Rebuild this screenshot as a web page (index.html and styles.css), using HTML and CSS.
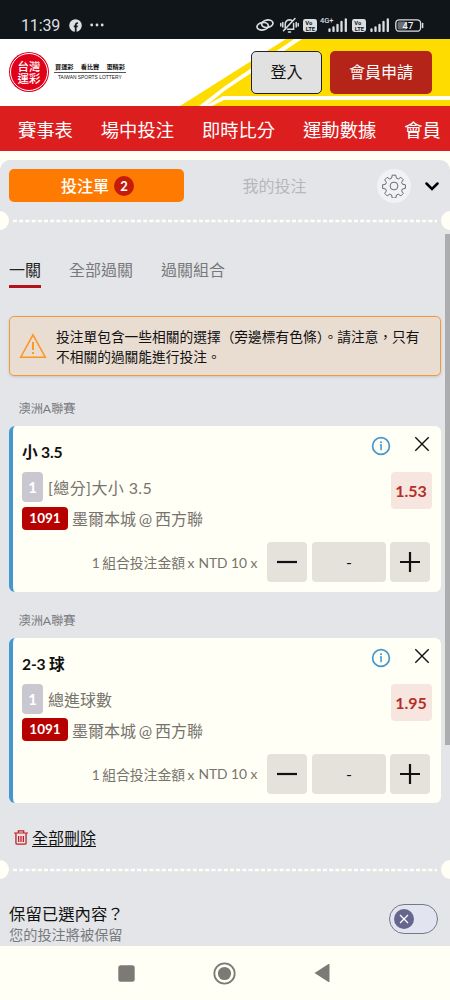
FILE: index.html
```
<!DOCTYPE html>
<html lang="zh-Hant">
<head>
<meta charset="utf-8">
<title>台灣運彩</title>
<link rel="stylesheet" href="styles.css">
</head>
<body>
<svg width="0" height="0" class="defs">
  <symbol id="info" viewBox="0 0 20 20"><circle cx="10" cy="10" r="8.4" fill="none" stroke="#4398d0" stroke-width="1.7"/><circle cx="10" cy="6.3" r="1" fill="#4398d0"/><path d="M8.900 9.100H10.100V14.200" fill="none" stroke="#4398d0" stroke-width="1.500"/></symbol>
  <symbol id="close" viewBox="0 0 16 16"><path d="M1.3 1.3L14.7 14.7M14.7 1.3L1.3 14.7" fill="none" stroke="#111" stroke-width="1.4"/></symbol>
  <symbol id="signal" viewBox="0 0 20 14"><path d="M1.5 13V11.500M5.5 13V9.500M9.5 13V7M13.5 13V4M17.8 13V1.500" fill="none" stroke="#dcdfe1" stroke-width="2.3" stroke-linecap="round"/></symbol>
</svg>
<div class="statusbar">
  <span class="time">11:39</span>
  <svg class="fb" width="13" height="13" viewBox="0 0 13 13"><circle cx="6.5" cy="6.5" r="6.3" fill="#dcdfe1"/><path d="M6.7 13V6Q6.7 4 8.9 4.1M4.8 7.4H8.7" fill="none" stroke="#10151a" stroke-width="1.7"/></svg>
  <svg class="dots" width="14" height="4" viewBox="0 0 14 4"><circle cx="1.7" cy="2" r="1.4"/><circle cx="7" cy="2" r="1.4"/><circle cx="12.2" cy="2" r="1.4"/></svg>
  <div class="status-right">
    <svg width="18" height="14" viewBox="0 0 18 14"><g fill="none" stroke="#dcdfe1" stroke-width="1.7" stroke-linecap="round"><ellipse cx="11.300" cy="5.700" rx="5.700" ry="3.700" transform="rotate(-10 11.300 5.700)"/><ellipse cx="6.700" cy="8.300" rx="5.700" ry="3.700" transform="rotate(-10 6.700 8.300)"/></g></svg>
    <svg class="bell" width="19" height="17" viewBox="0 0 19 17"><g fill="none" stroke="#dcdfe1" stroke-width="1.5" stroke-linecap="round"><path d="M5.200 12.200V7.500Q5.200 3.300 9.500 2.800Q11 2.900 12 3.700M13.600 6.500V12.200H7.500M3.500 13.800L15 1.500M8.500 15H10.500M2.800 5.500V10M.8 6.500V9M16.200 5.500V10M18.200 6.500V9"/></g></svg>
    <svg class="volte" width="14" height="13" viewBox="0 0 14 13"><rect width="14" height="13" rx="2.4" fill="#dcdfe1"/><text x="5.800" y="6" text-anchor="middle" class="volte-text">Vo</text><text x="7.4" y="11.7" text-anchor="middle" class="volte-text">LTE</text></svg>
    <div class="network"><span class="net-label">4G+</span><svg width="20" height="14"><use href="#signal"/></svg></div>
    <svg class="volte second" width="14" height="13" viewBox="0 0 14 13"><rect width="14" height="13" rx="2.4" fill="#dcdfe1"/><text x="5.800" y="6" text-anchor="middle" class="volte-text">Vo</text><text x="7.4" y="11.7" text-anchor="middle" class="volte-text">LTE</text></svg>
    <svg class="sig2" width="20" height="14"><use href="#signal"/></svg>
    <svg width="29" height="13" viewBox="0 0 29 13"><rect x=".8" y=".8" width="24.800" height="11.400" rx="3.500" fill="none" stroke="#dcdfe1" stroke-width="1.300"/><rect x="2.600" y="2.500" width="9" height="8" rx="1.500" fill="#6a6e72"/><path d="M27.600 4.500V8.500" stroke="#dcdfe1" stroke-width="1.500" stroke-linecap="round"/><text x="13" y="10" text-anchor="middle" class="battery-text">47</text></svg>
  </div>
</div>

<header class="header">
  <svg class="stripes" width="450" height="67" viewBox="0 0 450 67"><path d="M180 67L286 0H450V67Z" fill="#fedc00"/><path d="M199 67L225 47L294 0H302L225 51.500L206 67Z" fill="#fffff5"/><path d="M205 67L223 57H450V61H224L212 67Z" fill="#fffff5"/></svg>
  <div class="brand">
    <div class="seal"><div class="seal-text"><span>台灣</span><span>運彩</span></div></div>
    <div class="slogan"><div class="slogan-zh"><span>買運彩</span><span>看比賽</span><span>更精彩</span></div><div class="slogan-en">TAIWAN SPORTS LOTTERY</div></div>
  </div>
  <div class="account"><button class="login">登入</button><button class="join">會員申請</button></div>
</header>

<nav class="mainnav"><a>賽事表</a><a>場中投注</a><a>即時比分</a><a>運動數據</a><a>會員</a></nav>

<main class="slip">
  <div class="slip-head">
    <div class="slip-tab active">投注單<span class="count">2</span></div>
    <div class="slip-tab muted">我的投注</div>
    <div class="gear"><svg width="24" height="24" viewBox="0 0 24 24"><path d="M10.200 1.200h3.600l.6 3 1.900.8 2.500-1.700 2.500 2.500-1.700 2.500.8 1.900 3 .6v3.600l-3 .6-.8 1.900 1.700 2.500-2.500 2.500-2.500-1.700-1.900.8-.6 3h-3.600l-.6-3-1.900-.8-2.500 1.700-2.500-2.500 1.700-2.500-.8-1.900-3-.6v-3.600l3-.6.8-1.900-1.700-2.500 2.500-2.500 2.500 1.700 1.900-.8z" fill="none" stroke="#696b70" stroke-width="1" stroke-linejoin="round"/><circle cx="12" cy="12" r="3.900" fill="none" stroke="#696b70"/></svg></div>
    <svg class="chevron" width="14" height="9" viewBox="0 0 14 9"><path d="M1.500 1.500L7 7L12.500 1.500" fill="none" stroke="#000" stroke-width="2.500" stroke-linecap="round"/></svg>
  </div>
  <div class="tear"><svg width="450" height="4"><path d="M13 2H437" stroke="#fffff5" stroke-width="2.600" stroke-dasharray="4 2.200"/></svg></div>

  <div class="tabs"><span class="tab current">一關</span><span class="tab">全部過關</span><span class="tab">過關組合</span></div>

  <div class="notice">
    <svg width="28" height="26" viewBox="0 0 28 26"><path d="M14 1.800L26.300 24.200H1.700Z" fill="none" stroke="#ff941c" stroke-width="1.500"/><path d="M14 9V17M14 19V21" stroke="#ff941c" stroke-width="1.900"/></svg>
    <p>投注單包含一些相關的選擇（旁邊標有色條）。請注意，只有<br>不相關的過關能進行投注。</p>
  </div>

  <section class="bet">
    <div class="league">澳洲A聯賽</div>
    <article class="card">
      <div class="pick"><strong>小 3.5</strong><svg class="info" width="20" height="20"><use href="#info"/></svg><svg class="close" width="16" height="16"><use href="#close"/></svg></div>
      <div class="details">
        <div class="lines">
          <div class="market"><span class="leg">1</span><span class="market-name range">[總分]大小 3.5</span></div>
          <div class="match"><span class="code">1091</span><span class="teams">墨爾本城 @ 西方聯</span></div>
        </div>
        <div class="odds">1.53</div>
      </div>
      <div class="stake"><span class="stake-zh">1 組合投注金額 x</span><span class="stake-ntd">NTD 10 x</span><button class="step"><svg width="20" height="20"><path d="M0 10H20" stroke="#111" stroke-width="2.200"/></svg></button><div class="amount">-</div><button class="step plus"><svg width="20" height="20"><path d="M0 10H20M10 0V20" stroke="#111" stroke-width="2.200"/></svg></button></div>
    </article>
  </section>

  <section class="bet last">
    <div class="league">澳洲A聯賽</div>
    <article class="card">
      <div class="pick"><strong>2-3 球</strong><svg class="info" width="20" height="20"><use href="#info"/></svg><svg class="close" width="16" height="16"><use href="#close"/></svg></div>
      <div class="details">
        <div class="lines">
          <div class="market"><span class="leg">1</span><span class="market-name">總進球數</span></div>
          <div class="match"><span class="code">1091</span><span class="teams">墨爾本城 @ 西方聯</span></div>
        </div>
        <div class="odds">1.95</div>
      </div>
      <div class="stake"><span class="stake-zh">1 組合投注金額 x</span><span class="stake-ntd">NTD 10 x</span><button class="step"><svg width="20" height="20"><path d="M0 10H20" stroke="#111" stroke-width="2.200"/></svg></button><div class="amount">-</div><button class="step plus"><svg width="20" height="20"><path d="M0 10H20M10 0V20" stroke="#111" stroke-width="2.200"/></svg></button></div>
    </article>
  </section>

  <div class="clear"><svg width="14" height="15" viewBox="0 0 13 15" preserveAspectRatio="none"><path d="M0 3H13M4 2.800V.8H9V2.800M1.800 3.500V13.200Q1.800 14.200 2.800 14.200H10.200Q11.200 14.200 11.200 13.200V3.500M4.300 6V12M6.500 6V12M8.700 6V12" fill="none" stroke="#c41f28" stroke-width="1.200"/></svg><a>全部刪除</a></div>
  <div class="tear"><svg width="450" height="4"><path d="M13 2H437" stroke="#fffff5" stroke-width="2.600" stroke-dasharray="4 2.200"/></svg></div>
  <div class="keep">
    <div><div class="keep-title">保留已選內容？</div><div class="keep-sub">您的投注將被保留</div></div>
    <div class="toggle"><div class="knob"><svg width="10" height="10" viewBox="0 0 10 10"><path d="M1 1L9 9M9 1L1 9" stroke="#fff" stroke-width="1.200"/></svg></div></div>
  </div>
  <div class="scrollbar"></div>
</main>

<footer class="sysnav">
  <svg width="17" height="17"><rect x=".3" y=".3" width="16.400" height="16.400" rx="2.500" fill="#7d7a76"/></svg>
  <svg width="23" height="23"><circle cx="11.500" cy="11.500" r="10.200" fill="none" stroke="#7d7a76" stroke-width="1.800"/><circle cx="11.500" cy="11.500" r="6.600" fill="#7d7a76"/></svg>
  <svg width="16" height="20"><path d="M.5 10L14.500 1Q15.500 .6 15.500 1.500V18.500Q15.500 19.400 14.500 19Z" fill="#7d7a76"/></svg>
</footer>
</body>
</html>
```
FILE: styles.css
```
* { box-sizing: border-box; }
body {
  margin: 0;
  width: 450px;
  height: 1000px;
  overflow: hidden;
  background: #fffff5;
  font-family: Lato, "Noto Sans CJK TC", sans-serif;
  color: #111;
}
svg { display: block; flex: none; }
.defs { position: absolute; }
button { border: 0; padding: 0; font-family: inherit; color: inherit; }
span, a, strong { white-space: nowrap; }

.statusbar {
  display: flex;
  align-items: center;
  height: 39px;
  padding: 11px 26px 0 21px;
  background: #10151a;
  color: #dcdfe1;
}
.time { font: 16px/18px Roboto, sans-serif; width: 39px; padding-top: 1px; letter-spacing: -.15px; }
.fb { margin-left: 9px; }
.dots { margin-left: 8px; fill: #dcdfe1; }
.status-right { display: flex; align-items: center; margin-left: auto; }
.bell { margin-left: 6px; }
.volte { margin-left: 4px; }
.volte-text { font: bold 5.8px Roboto, sans-serif; fill: #10151a; }
.network { position: relative; margin-left: 11px; }
.net-label { position: absolute; left: -8px; top: -2px; font: 500 7.5px/9px Roboto, sans-serif; }
.volte.second { margin-left: 4px; }
.sig2 { margin: 0 5px 0 4px; }
.battery-text { font: 500 9.500px Roboto, sans-serif; fill: #eee; }

.header {
  position: relative;
  display: flex;
  justify-content: space-between;
  height: 67px;
  padding: 12px 18px 0 9px;
  background: #fff;
}
.stripes { position: absolute; left: 0; top: 0; }
.brand { position: relative; display: flex; }
.seal {
  width: 40px;
  height: 40px;
  margin-top: 1px;
  padding: 1px;
  border-radius: 50%;
  background: #e1001a;
}
.seal-text {
  display: flex;
  flex-direction: column;
  align-items: center;
  width: 38px;
  height: 38px;
  padding-top: 6px;
  border: 1px solid #fff;
  border-radius: 50%;
  color: #fff;
  font-family: "Noto Sans CJK TC", sans-serif;
  font-size: 11.500px;
  font-weight: 500;
  line-height: 12px;
}
.slogan { margin: 11px 0 0 5px; width: 72px; }
.slogan-zh {
  display: flex;
  justify-content: space-between;
  height: 11px;
  padding: 0 1px;
  border-bottom: 1px solid #555;
  font-size: 6.200px;
  font-weight: 700;
  line-height: 9px;
}
.slogan-en { padding-left: 4px; font: 4.900px/9px "Liberation Sans", sans-serif; white-space: nowrap; }
.account { position: relative; display: flex; gap: 8px; }
.login, .join { height: 43px; border-radius: 5px; font-size: 16px; line-height: 40px; padding-bottom: 2px; }
.login { width: 71px; border: 1px solid #222; background: #e1e1e1; }
.join { width: 102px; background: #b42419; color: #fff; }

.mainnav {
  display: flex;
  gap: 28px;
  height: 45px;
  padding-left: 18px;
  overflow: hidden;
  background: #dc1e1e;
  color: #fff;
  font-size: 18.300px;
  line-height: 48px;
}

.slip {
  position: relative;
  height: 786px;
  margin-top: 9px;
  border-radius: 10px 10px 0 0;
  background: #e4e5e8;
}
.slip-head { display: flex; align-items: center; height: 51px; padding: 0 11px 0 9px; }
.slip-tab { font-size: 16px; line-height: 32px; text-align: center; }
.slip-tab.active {
  display: flex;
  align-items: center;
  justify-content: center;
  gap: 5px;
  width: 175px;
  height: 33px;
  padding-left: 2px;
  border-radius: 5px;
  background: #ff7a00;
  color: #fff;
  font-weight: 500;
}
.count { width: 20px; height: 20px; border-radius: 50%; background: #c41b0b; font-size: 13px; font-weight: 700; line-height: 20px; }
.slip-tab.muted { width: 181px; color: #b6b7ba; }
.gear { display: grid; place-items: center; width: 34px; height: 34px; margin-left: 12px; border-radius: 50%; background: #f1f2f5; }
.chevron { margin: 2px 0 0 14px; }
.tear { display: flex; align-items: center; position: relative; height: 19px; overflow: hidden; }
.tear::before, .tear::after { content: ""; position: absolute; top: 0; width: 19px; height: 19px; border-radius: 50%; background: #fffff5; }
.tear::before { left: -10px; }
.tear::after { right: -10px; }

.tabs { display: flex; gap: 28px; padding: 25px 9px 0; height: 86px; font-size: 16px; line-height: 29px; color: #77797d; }
.tab { height: 33px; }
.tab.current { border-bottom: 3px solid #b5131c; color: #222; width: 32px; }

.notice {
  display: flex;
  align-items: center;
  width: 432px;
  height: 60px;
  margin-left: 9px;
  padding-left: 9px;
  gap: 9px;
  border: 1px solid #f29a3a;
  border-radius: 5px;
  background: #e9dcd1;
  box-shadow: 0 1px 3px #0002;
}
.notice p { margin: 0; padding-top: 1px; font-size: 13.720px; line-height: 20px; white-space: nowrap; }

.bet { height: 211.500px; padding: 24px 9px 0; }
.league { height: 26px; padding-left: 9.500px; font-size: 12.200px; line-height: 17px; color: #77797d; }
.card { height: 165.500px; padding: 10px 9.500px 0 9px; border-left: 4px solid #4398d0; border-radius: 6px; background: #fffff5; }
.pick { display: flex; height: 36px; }
.pick strong { flex: 1; font-size: 15.700px; font-weight: 700; line-height: 32px; letter-spacing: -.2px; }
.close { margin: 0 1.500px 0 23px; }
.details { display: flex; justify-content: space-between; }
.lines { color: #77736e; font-size: 16px; }
.market, .match { display: flex; align-items: center; }
.market { height: 30px; gap: 5px; }
.range { letter-spacing: .4px; }
.leg { width: 21px; height: 30px; border-radius: 4px; background: #c9c7d0; color: #fff; font-size: 15px; font-weight: 700; line-height: 30px; text-align: center; }
.match { height: 32px; gap: 4px; }
.teams { word-spacing: -1.300px; }
.code { width: 46px; height: 23px; border-radius: 4px; background: #b70000; color: #fff; font-size: 13.500px; font-weight: 700; line-height: 23px; text-align: center; }
.odds { width: 41px; height: 37px; border-radius: 4px; background: #f7e6df; color: #b42e28; font-size: 16px; font-weight: 700; line-height: 37px; text-align: center; }
.stake { display: flex; justify-content: flex-end; align-items: center; height: 40px; margin-top: 8px; padding-right: 1.500px; color: #77736e; font-size: 13.800px; }
.stake-zh { word-spacing: -1px; }
.stake-ntd { margin: 0 9px 0 4px; }
.step { display: grid; place-items: center; width: 40px; height: 40px; border-radius: 4px; background: #e5e2dc; }
.amount { width: 74px; height: 40px; margin: 0 4px 0 5.500px; border-radius: 4px; background: #e5e2dc; color: #111; font-size: 16px; line-height: 40px; text-align: center; }

.clear { display: flex; align-items: center; gap: 4.500px; height: 61px; padding: 15px 0 0 13.500px; font-size: 16px; }
.clear a { text-decoration: underline; text-underline-offset: 2px; }
.keep { display: flex; justify-content: space-between; padding: 25px 12px 0 9px; }
.keep-title { font-size: 16.400px; line-height: 20px; }
.keep-sub { padding-top: 1px; font-size: 14.200px; line-height: 20px; color: #77797d; }
.toggle { width: 49px; height: 30px; padding: 4px; border: 1px solid #77778c; border-radius: 15px; background: #e2e4ef; }
.knob { display: grid; place-items: center; width: 20px; height: 20px; border-radius: 50%; background: #66658d; }
.scrollbar { position: absolute; right: 0; top: 74px; width: 5px; height: 511px; background: #acadaf; }

.sysnav { display: flex; align-items: center; height: 54px; padding: 0 0 0 118px; }
.sysnav svg:nth-child(2) { margin: 0 78px; }
```
